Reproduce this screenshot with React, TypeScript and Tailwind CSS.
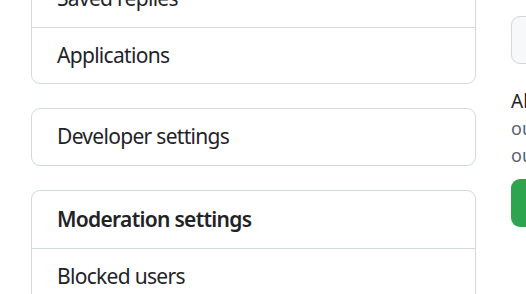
export default function App() {
  const row = "h-[56px] flex items-center pl-[25px] text-[21px] tracking-[-0.7px] text-[#1f2328]";
  return (
    <div className="w-[526px] h-[294px] overflow-hidden bg-white flex" style={{ fontFamily: '"Noto Sans", sans-serif' }}>
      <div className="ml-[31px] w-[445px] shrink-0 -mt-[30px] flex flex-col gap-[24px]">
        <div className="border border-[#d1d9e0] rounded-[9px]">
          <div className={row}>Saved replies</div>
          <div className={row + " border-t border-[#d1d9e0]"}>Applications</div>
        </div>
        <div className="border border-[#d1d9e0] rounded-[9px]">
          <div className={row}>Developer settings</div>
        </div>
        <div className="border border-[#d1d9e0] rounded-[9px]">
          <div className={row + " font-semibold h-[57px]"}>Moderation settings</div>
          <div className={row + " border-t border-[#d1d9e0]"}>Blocked users</div>
          <div className={row + " border-t border-[#d1d9e0]"}>Interaction limits</div>
        </div>
      </div>
      <div className="ml-[35px] flex-1 min-w-0 pt-[16px]">
        <div className="h-[48px] w-[300px] rounded-[9px] border border-[#d1d9e0] bg-[#f6f8fa]" />
        <div className="mt-[24px] text-[19px] leading-[27px] text-[#1f2328] whitespace-nowrap">All</div>
        <div className="text-[18px] leading-[27px] text-[#59636e] whitespace-nowrap">ou</div>
        <div className="text-[18px] leading-[27px] text-[#59636e] whitespace-nowrap">ou</div>
        <div className="mt-[10px] h-[48px] w-[200px] rounded-[9px] bg-[#2da44e]" />
      </div>
    </div>
  );
}
